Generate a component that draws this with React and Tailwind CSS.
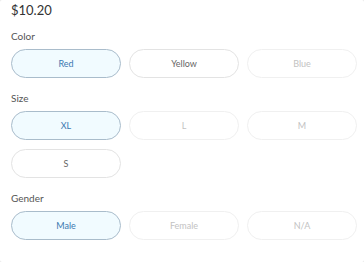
const groups = [
  {
    label: "Color",
    options: [
      { name: "Red", state: "selected" },
      { name: "Yellow", state: "normal" },
      { name: "Blue", state: "disabled" },
    ],
  },
  {
    label: "Size",
    options: [
      { name: "XL", state: "selected" },
      { name: "L", state: "disabled" },
      { name: "M", state: "disabled" },
      { name: "S", state: "normal" },
    ],
  },
  {
    label: "Gender",
    options: [
      { name: "Male", state: "selected" },
      { name: "Female", state: "disabled" },
      { name: "N/A", state: "disabled" },
    ],
  },
];

const styles = {
  selected: "border-[#a9bccb] bg-[#f1fbff] text-[#3a78b0]",
  normal: "border-[#e3e3e3] bg-white text-[#666666]",
  disabled: "border-[#f0f0f0] bg-white text-[#c2c2c2]",
};

const OptionButton = ({ option }) => (
  <button
    className={`h-[29px] rounded-full border text-[9px] ${styles[option.state]}`}
  >
    {option.name}
  </button>
);

export default function App() {
  return (
    <div className="h-[262px] w-[364px] bg-[#e6e6e6]" style={{ fontFamily: "Lato, 'Open Sans', sans-serif" }}>
      <div className="h-full w-full rounded-[2px] bg-white pl-[11px] pt-[1px]">
        <div className="text-[13px] leading-[18px] text-[#333333]">$10.20</div>
        {groups.map((group, i) => (
          <div key={group.label} className={i === 0 ? "mt-[10px]" : "mt-[13px]"}>
            <div className="text-[10px] leading-[14px] text-[#555555]">{group.label}</div>
            <div className="mt-[6px] grid grid-cols-[repeat(3,110px)] gap-x-[8px] gap-y-[9px]">
              {group.options.map((option) => (
                <OptionButton key={option.name} option={option} />
              ))}
            </div>
          </div>
        ))}
      </div>
    </div>
  );
}
